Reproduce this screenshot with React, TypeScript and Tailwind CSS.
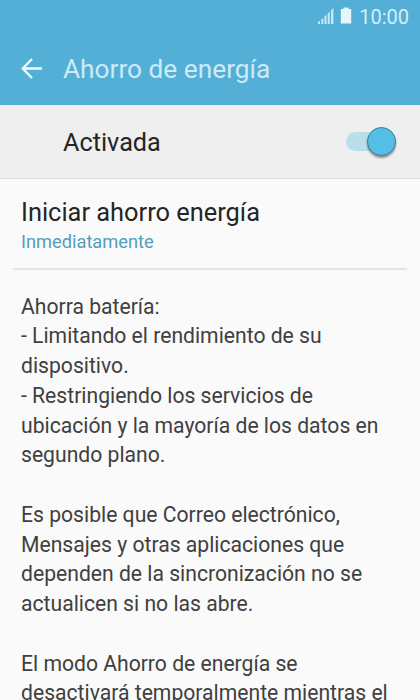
import React from "react";

const paragraphs = [
  [
    "Ahorra batería:",
    "- Limitando el rendimiento de su",
    "dispositivo.",
    "- Restringiendo los servicios de",
    "ubicación y la mayoría de los datos en",
    "segundo plano.",
  ],
  [
    "Es posible que Correo electrónico,",
    "Mensajes y otras aplicaciones que",
    "dependen de la sincronización no se",
    "actualicen si no las abre.",
  ],
  ["El modo Ahorro de energía se", "desactivará temporalmente mientras el"],
];

function StatusBar() {
  return (
    <div className="flex h-8 items-center justify-end pr-[11px] text-[#d3edf7]">
      <svg width="18" height="18" viewBox="0 0 18 18" fill="#c9e9f5" aria-hidden="true">
        <path d="M1 15l2-1V17H1zM4.300 12.500l2-1.500V17h-2zM7.500 9.500l2-1.700V17h-2zM10.700 6.500l2-1.700V17h-2zM14 3.200l2.400-2V17H14z" />
      </svg>
      <svg className="ml-[5px]" width="12" height="18" viewBox="0 0 12 18" fill="#e6f6fc" aria-hidden="true">
        <path d="M3.500 0.500h5V2h2.700v14.500H0.800V2h2.700z" />
      </svg>
      <span className="ml-[7px] pt-px text-[20px] leading-8">10:00</span>
    </div>
  );
}

export default function App() {
  return (
    <div className="flex h-[700px] w-[420px] flex-col overflow-hidden bg-[#fafafa] font-['Roboto',sans-serif]">
      <header className="h-[105px] shrink-0 bg-[#53afd6]">
        <StatusBar />
        <div className="flex h-[73px] items-center pl-[21px]">
          <svg width="22" height="22" viewBox="0 0 22 22" fill="none" stroke="#f4fcff" strokeWidth="2.300" aria-hidden="true">
            <path d="M21 10.500H2M11 1L1.700 10.500L11 20" />
          </svg>
          <h1 className="ml-5 text-[26.250px] leading-[30px] text-[#cdeaf6]">Ahorro de energía</h1>
        </div>
      </header>
      <section className="flex h-[74px] shrink-0 items-center justify-between border-b border-[#dddddd] bg-[#efefef] pr-6 pl-[63px]">
        <span className="pt-[3px] text-[25.250px] leading-[30px] text-[#252525]">Activada</span>
        <div className="flex h-[19px] w-[50px] items-center justify-end rounded-full bg-[#b9dfeb]">
          <div className="size-[29px] shrink-0 rounded-full border border-[#367f9b] bg-[#55bee6] shadow-[0_2px_2px_rgba(0,0,0,0.4)]" />
        </div>
      </section>
      <section className="mx-[13px] h-[91px] shrink-0 border-b-2 border-[#e3e3e3] px-2 pt-[18px]">
        <h2 className="text-[25.400px] leading-[30px] text-[#252525]">Iniciar ahorro energía</h2>
        <p className="text-[18.250px] leading-[29px] text-[#529fbd]">Inmediatamente</p>
      </section>
      <main className="flex flex-col gap-[29.750px] pt-[21.500px] pl-[21px] text-[21.150px] leading-[29.750px] whitespace-nowrap text-[#404040]">
        {paragraphs.map((lines) => (
          <p key={lines[0]}>
            {lines.map((line) => (
              <span key={line} className="block">{line}</span>
            ))}
          </p>
        ))}
      </main>
    </div>
  );
}
